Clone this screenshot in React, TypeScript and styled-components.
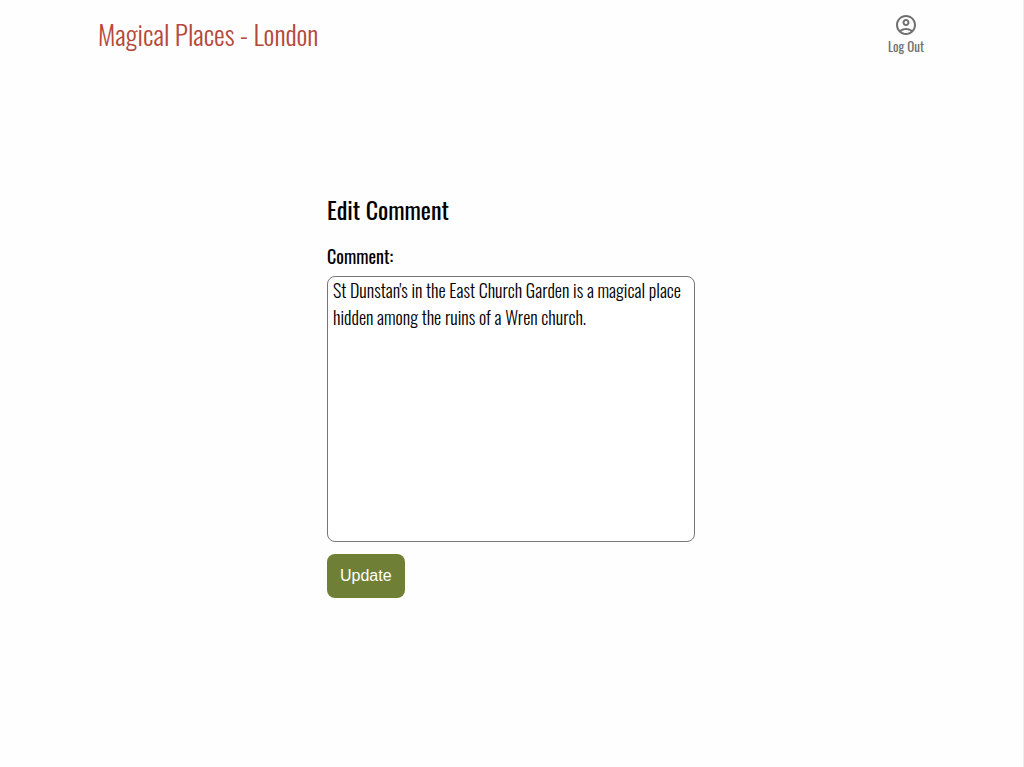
import React, { useState } from "react";
import styled, { createGlobalStyle } from "styled-components";
import { MdOutlineAccountCircle } from "react-icons/md";

const GlobalStyle = createGlobalStyle`
  *, *::before, *::after {
    box-sizing: border-box;
  }

  body {
    margin: 0;
    background: #fefefe;
    color: #000;
    font-family: Oswald, "Open Sans Condensed", sans-serif;
  }
`;

const Page = styled.div`
  min-height: 100vh;
  border-right: 1px solid #ececec;
`;

const Header = styled.header`
  display: flex;
  justify-content: space-between;
  align-items: center;
  height: 68px;
  padding: 0 99px 0 98px;
`;

const SiteTitle = styled.a`
  color: #b5483a;
  font-size: 27px;
  font-weight: 300;
  line-height: 40px;
  text-decoration: none;
`;

const LogOutButton = styled.button`
  display: flex;
  flex-direction: column;
  align-items: center;
  padding: 0;
  border: 0;
  background: none;
  color: #707070;
  font-family: inherit;
  font-size: 13px;
  font-weight: 400;
  line-height: 18px;
  cursor: pointer;
`;

const Main = styled.main`
  display: flex;
  justify-content: center;
  padding: 123px 17px 32px 16px;
`;

const CommentForm = styled.form`
  display: flex;
  flex-direction: column;
  align-items: flex-start;
  width: 100%;
  max-width: 368px;
`;

const FormTitle = styled.h1`
  margin: 0 0 16px;
  font-size: 24px;
  font-weight: 400;
  line-height: 36px;
`;

const Label = styled.label`
  margin-bottom: 7px;
  font-size: 18px;
  font-weight: 400;
  line-height: 26px;
`;

const CommentBox = styled.textarea`
  width: 100%;
  height: 266px;
  padding: 0 5px;
  border: 1px solid #767676;
  border-radius: 8px;
  background: #fff;
  color: #000;
  font-family: inherit;
  font-size: 18px;
  font-weight: 300;
  line-height: 27px;
  resize: none;
`;

const UpdateButton = styled.button`
  height: 44px;
  margin-top: 12px;
  padding: 0 13px;
  border: 0;
  border-radius: 8px;
  background: #6f8036;
  color: #fff;
  font-family: "Liberation Sans", Arial, sans-serif;
  font-size: 16px;
  cursor: pointer;
`;

export default function App() {
  const [comment, setComment] = useState(
    "St Dunstan's in the East Church Garden is a magical place hidden among the ruins of a Wren church."
  );

  return (
    <>
      <GlobalStyle />
      <Page>
        <Header>
          <SiteTitle href="#">Magical Places - London</SiteTitle>
          <LogOutButton type="button">
            <MdOutlineAccountCircle size={24} aria-hidden="true" />
            Log Out
          </LogOutButton>
        </Header>
        <Main>
          <CommentForm onSubmit={(event) => event.preventDefault()}>
            <FormTitle>Edit Comment</FormTitle>
            <Label htmlFor="comment">Comment:</Label>
            <CommentBox
              id="comment"
              value={comment}
              spellCheck={false}
              onChange={(event) => setComment(event.target.value)}
            />
            <UpdateButton type="submit">Update</UpdateButton>
          </CommentForm>
        </Main>
      </Page>
    </>
  );
}
